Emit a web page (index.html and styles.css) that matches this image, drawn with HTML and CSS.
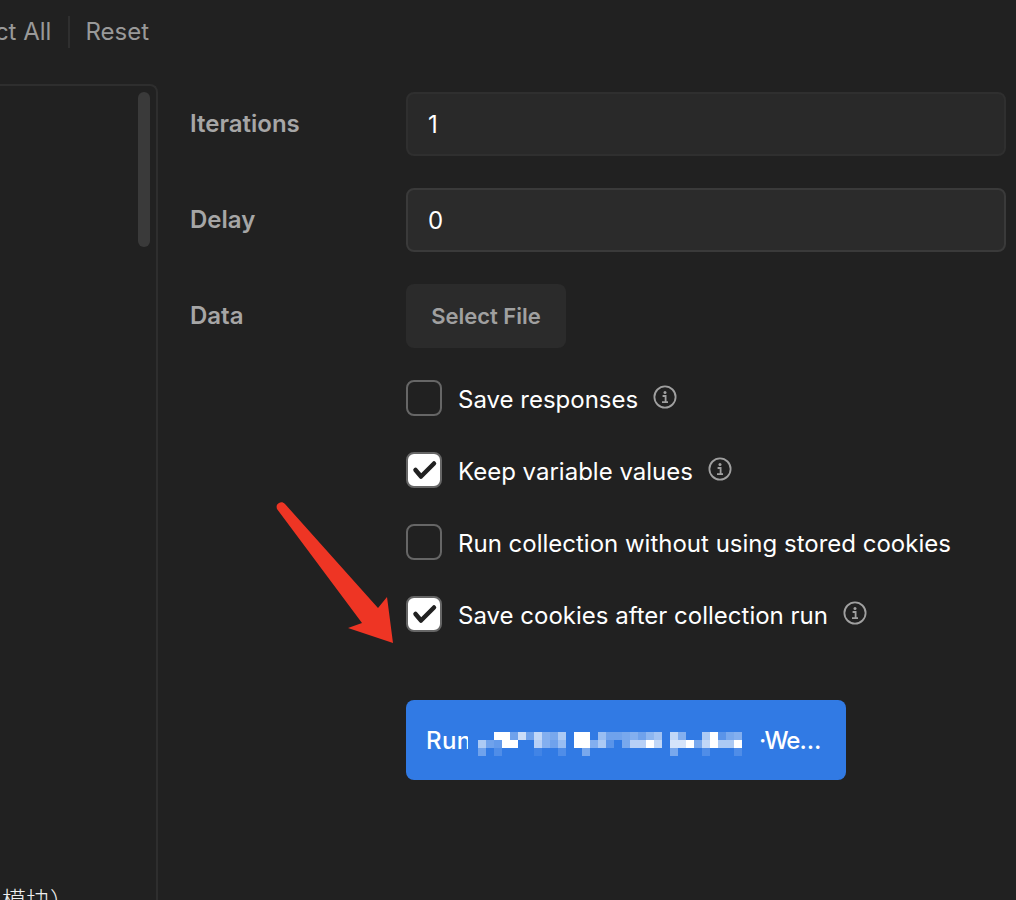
FILE: index.html
```html
<!DOCTYPE html>
<html lang="en">
<head>
<meta charset="utf-8">
<title>Collection Runner</title>
<link rel="stylesheet" href="styles.css">
</head>
<body>
<div class="page">
  <aside class="left">
    <div class="toolbar">
      <span class="tool">Select All</span>
      <span class="divider"></span>
      <span class="tool">Reset</span>
    </div>
    <div class="panel">
      <div class="scrollthumb"></div>
      <div class="row row-frag">接</div>
      <div class="row row-last">模块）</div>
    </div>
  </aside>
  <main class="form">
    <div class="field">
      <label class="label">Iterations</label>
      <div class="input">1</div>
    </div>
    <div class="field">
      <label class="label">Delay</label>
      <div class="input input-hover">0</div>
    </div>
    <div class="field">
      <label class="label">Data</label>
      <div class="file-btn">Select File</div>
    </div>
    <div class="checks">
      <div class="check">
        <span class="box"></span>
        <span class="check-text">Save responses</span>
        <svg class="info" viewBox="0 0 24 24"><circle cx="12" cy="12" r="10.6" fill="none" stroke="#a0a0a0" stroke-width="1.8"/><circle cx="12" cy="7.4" r="1.5" fill="#a0a0a0"/><path d="M9.6 11h3v6M9 17.2h6" fill="none" stroke="#a0a0a0" stroke-width="1.8"/></svg>
      </div>
      <div class="check">
        <span class="box on"><svg viewBox="0 0 32 32"><path d="M7.5 16l5.5 6.5L26 9.5" fill="none" stroke="#212121" stroke-width="4.5" stroke-linecap="round" stroke-linejoin="round"/></svg></span>
        <span class="check-text">Keep variable values</span>
        <svg class="info" viewBox="0 0 24 24"><circle cx="12" cy="12" r="10.6" fill="none" stroke="#a0a0a0" stroke-width="1.8"/><circle cx="12" cy="7.4" r="1.5" fill="#a0a0a0"/><path d="M9.6 11h3v6M9 17.2h6" fill="none" stroke="#a0a0a0" stroke-width="1.8"/></svg>
      </div>
      <div class="check">
        <span class="box"></span>
        <span class="check-text">Run collection without using stored cookies</span>
      </div>
      <div class="check">
        <span class="box on"><svg viewBox="0 0 32 32"><path d="M7.5 16l5.5 6.5L26 9.5" fill="none" stroke="#212121" stroke-width="4.5" stroke-linecap="round" stroke-linejoin="round"/></svg></span>
        <span class="check-text">Save cookies after collection run</span>
        <svg class="info" viewBox="0 0 24 24"><circle cx="12" cy="12" r="10.6" fill="none" stroke="#a0a0a0" stroke-width="1.8"/><circle cx="12" cy="7.4" r="1.5" fill="#a0a0a0"/><path d="M9.6 11h3v6M9 17.2h6" fill="none" stroke="#a0a0a0" stroke-width="1.8"/></svg>
      </div>
    </div>
    <div class="run-btn">
      <span class="run-a">Run</span>
      <svg class="mosaic" width="292" height="32" viewBox="0 0 292 32">
        <g fill="#fff" transform="translate(8 8)">
          <rect x="16" y="0" width="8" height="8"/><rect x="24" y="0" width="8" height="8"/><rect x="32" y="0" width="8" height="8" opacity=".3"/><rect x="40" y="0" width="8" height="8" opacity=".75"/><rect x="48" y="0" width="8" height="8" opacity=".3"/><rect x="56" y="0" width="8" height="8" opacity=".7"/><rect x="64" y="0" width="8" height="8" opacity=".4"/><rect x="72" y="0" width="8" height="8" opacity=".35"/><rect x="80" y="0" width="8" height="8" opacity=".6"/><rect x="96" y="0" width="8" height="8"/><rect x="104" y="0" width="8" height="8"/><rect x="120" y="0" width="8" height="8" opacity=".5"/><rect x="128" y="0" width="8" height="8" opacity=".3"/><rect x="136" y="0" width="8" height="8" opacity=".3"/><rect x="144" y="0" width="8" height="8" opacity=".35"/><rect x="152" y="0" width="8" height="8" opacity=".4"/><rect x="160" y="0" width="8" height="8" opacity=".3"/><rect x="168" y="0" width="8" height="8" opacity=".45"/><rect x="176" y="0" width="8" height="8" opacity=".55"/><rect x="192" y="0" width="8" height="8" opacity=".7"/><rect x="200" y="0" width="8" height="8" opacity=".4"/><rect x="224" y="0" width="8" height="8" opacity=".6"/><rect x="232" y="0" width="8" height="8"/><rect x="240" y="0" width="8" height="8" opacity=".2"/><rect x="248" y="0" width="8" height="8" opacity=".35"/><rect x="256" y="0" width="8" height="8" opacity=".4"/>
          <rect x="0" y="8" width="8" height="8" opacity=".6"/><rect x="8" y="8" width="8" height="8" opacity=".3"/><rect x="16" y="8" width="8" height="8" opacity=".25"/><rect x="24" y="8" width="8" height="8"/><rect x="32" y="8" width="8" height="8"/><rect x="56" y="8" width="8" height="8" opacity=".65"/><rect x="64" y="8" width="8" height="8" opacity=".4"/><rect x="72" y="8" width="8" height="8" opacity=".3"/><rect x="80" y="8" width="8" height="8" opacity=".5"/><rect x="96" y="8" width="8" height="8"/><rect x="104" y="8" width="8" height="8"/><rect x="112" y="8" width="8" height="8" opacity=".4"/><rect x="120" y="8" width="8" height="8" opacity=".6"/><rect x="128" y="8" width="8" height="8" opacity=".2"/><rect x="144" y="8" width="8" height="8" opacity=".35"/><rect x="152" y="8" width="8" height="8" opacity=".65"/><rect x="160" y="8" width="8" height="8" opacity=".65"/><rect x="168" y="8" width="8" height="8"/><rect x="176" y="8" width="8" height="8" opacity=".7"/><rect x="192" y="8" width="8" height="8" opacity=".8"/><rect x="200" y="8" width="8" height="8" opacity=".8"/><rect x="208" y="8" width="8" height="8"/><rect x="216" y="8" width="8" height="8" opacity=".35"/><rect x="224" y="8" width="8" height="8" opacity=".7"/><rect x="232" y="8" width="8" height="8"/><rect x="240" y="8" width="8" height="8" opacity=".6"/><rect x="248" y="8" width="8" height="8" opacity=".6"/><rect x="256" y="8" width="8" height="8"/>
          <rect x="0" y="16" width="8" height="8" opacity=".3"/><rect x="16" y="16" width="8" height="8" opacity=".15"/><rect x="56" y="16" width="8" height="8" opacity=".08"/><rect x="80" y="16" width="8" height="8" opacity=".15"/><rect x="104" y="16" width="8" height="8" opacity=".35"/><rect x="192" y="16" width="8" height="8" opacity=".35"/><rect x="224" y="16" width="8" height="8" opacity=".15"/><rect x="256" y="16" width="8" height="8" opacity=".15"/>
        </g>
      </svg>
      <span class="run-b">·We…</span>
    </div>
  </main>
</div>
<svg class="arrow" viewBox="0 0 1016 900" width="1016" height="900"><path d="M277 509c-1-3 0-5 2-6s4-1 6 1l93 104 9-11 6 46-45-15 14-5z" fill="#ee3524"/></svg>
</body>
</html>
```

FILE: styles.css
```css
* { box-sizing: border-box; }
html, body { margin: 0; height: 100%; background: #212121; }
body { position: relative; overflow: hidden; font-family: Inter, "Noto Sans CJK SC", sans-serif; font-size: 24px; color: #fff; }
.page { display: flex; height: 900px; overflow: hidden; }

.left { flex: none; width: 158px; display: flex; flex-direction: column; }
.toolbar { flex: none; height: 84px; padding: 16px 9px 0 0; display: flex; justify-content: flex-end; align-items: flex-start; white-space: nowrap; color: #999; }
.tool { flex: none; line-height: 32px; }
.divider { flex: none; width: 2px; height: 32px; margin: 0 15px 0 17px; background: #2f2f2f; }
.panel { position: relative; flex: 1; margin-left: -12px; border: 2px solid #2e2e2e; border-left: 0; border-bottom: 0; border-radius: 0 8px 0 0; overflow: hidden; }
.scrollthumb { position: absolute; top: 6px; right: 6px; width: 12px; height: 155px; border-radius: 6px; background: #3a3a3a; }
.row { white-space: nowrap; }
.row-frag { margin: 354px 0 0 -10px; line-height: 32px; font-size: 14px; color: #aaa; }
.row-last { margin: 413px 0 0 14px; line-height: 32px; color: #eee; font-weight: 300; }

.form { flex: 1; padding: 92px 10px 0 32px; display: flex; flex-direction: column; min-width: 0; }
.field { display: flex; align-items: center; height: 64px; margin-bottom: 32px; }
.label { flex: none; width: 216px; position: relative; top: -1px; font-weight: 600; color: #a6a6a6; }
.input { flex: 1; height: 64px; display: flex; align-items: center; padding: 0 20px; background: #292929; border: 2px solid #2f2f2f; border-radius: 8px; }
.input-hover { background: #2b2b2b; border-color: #3a3a3a; }
.file-btn { flex: none; width: 160px; height: 64px; display: flex; align-items: center; justify-content: center; border-radius: 8px; background: #2b2b2b; color: #a0a0a0; font-size: 22px; font-weight: 600; }

.checks { margin-left: 216px; display: flex; flex-direction: column; gap: 36px; }
.check { display: flex; align-items: center; height: 36px; white-space: nowrap; }
.box { flex: none; width: 36px; height: 36px; border: 2px solid #666; border-radius: 8px; display: block; }
.box svg { display: block; width: 32px; height: 32px; }
.box.on { background: #fff; }
.check-text { margin-left: 16px; position: relative; top: 1px; }
.info { flex: none; width: 24px; height: 24px; margin-left: 15px; position: relative; top: -1px; }

.run-btn { margin: 68px 0 0 216px; width: 440px; height: 80px; padding-left: 20px; display: flex; align-items: center; background: #317ae4; border-radius: 8px; font-weight: 500; white-space: nowrap; }
.run-a { flex: none; width: 42px; margin-right: 2px; letter-spacing: .4px; overflow: hidden; }
.mosaic { flex: none; display: block; }
.run-b { flex: none; margin-left: -3px; letter-spacing: -.9px; }

.arrow { position: absolute; left: 0; top: 0; pointer-events: none; }
```
